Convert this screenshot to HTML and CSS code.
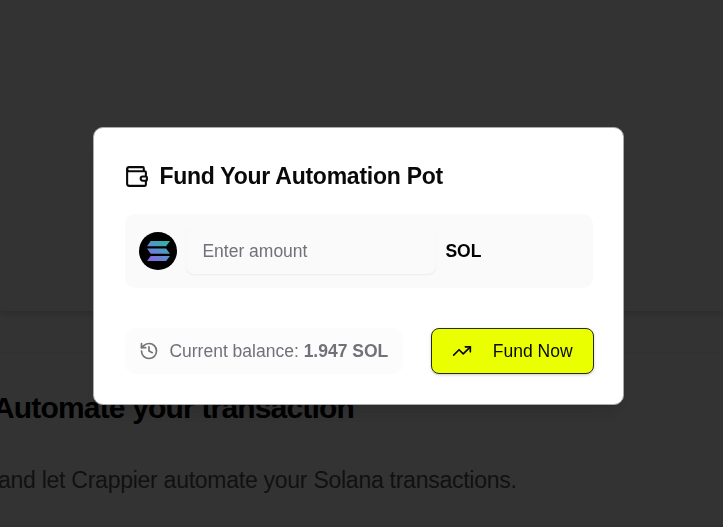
FILE: index.html
```html
<!DOCTYPE html>
<html lang="en">
<head>
<meta charset="utf-8">
<title>Fund Your Automation Pot</title>
<link rel="stylesheet" href="styles.css">
</head>
<body>
<main class="page">
  <section class="upper"></section>
  <section class="promo">
    <h1 class="promo-title">Automate your transaction</h1>
    <p class="promo-text">and let Crappier automate your Solana transactions.</p>
  </section>
</main>
<div class="overlay">
  <div class="dialog" role="dialog">
    <h2 class="dialog-title">
      <svg class="icon-wallet" viewBox="0 0 24 24"><path d="M19 7V4a1 1 0 0 0-1-1H5a2 2 0 0 0 0 4h15a1 1 0 0 1 1 1v4h-3a2 2 0 0 0 0 4h3a1 1 0 0 0 1-1v-2a1 1 0 0 0-1-1"/><path d="M3 5v14a2 2 0 0 0 2 2h15a1 1 0 0 0 1-1v-4"/></svg>
      <span>Fund Your Automation Pot</span>
    </h2>
    <div class="amount">
      <svg class="solana" viewBox="0 0 38 38">
        <defs><linearGradient id="sol" gradientUnits="userSpaceOnUse" x1="27" y1="8" x2="12" y2="30"><stop offset="0" stop-color="#2bb8a0"/><stop offset=".5" stop-color="#5b8fcc"/><stop offset="1" stop-color="#8a62e6"/></linearGradient></defs>
        <circle cx="19" cy="19" r="19"/>
        <path fill="url(#sol)" d="M11.7 9H31l-3.9 5.2H8zM8 16.5h19.1l3.9 5.2H11.7zM11.7 23.9H31l-3.9 5.2H8z"/>
      </svg>
      <input class="field" type="text" placeholder="Enter amount">
      <span class="unit">SOL</span>
    </div>
    <div class="actions">
      <div class="balance">
        <svg class="icon-history" viewBox="0 0 24 24"><path d="M3 12a9 9 0 1 0 9-9 9.75 9.75 0 0 0-6.74 2.74L3 8"/><path d="M3 3v5h5M12 7v5l4 2"/></svg>
        <span>Current balance: <strong>1.947 SOL</strong></span>
      </div>
      <button class="fund">
        <svg class="icon-trend" viewBox="0 0 24 24"><path d="M22 7l-8.5 8.5-5-5L2 17"/><path d="M16 7h6v6"/></svg>
        <span>Fund Now</span>
      </button>
    </div>
  </div>
</div>
</body>
</html>
```
FILE: styles.css
```css
* { box-sizing: border-box; }
body {
  margin: 0;
  height: 527px;
  overflow: hidden;
  background: #fff;
  color: #09090b;
  font-family: "Liberation Sans", Arial, sans-serif;
  font-size: 17.5px;
}
.page { height: 527px; display: flex; flex-direction: column; }
.upper { height: 311px; flex: none; box-shadow: 0 2px 8px rgba(0, 0, 0, .2); }
.promo {
  height: 174px;
  flex: none;
  margin-top: 41px;
  padding-top: 37px;
  border-top: 1px solid #f4f4f5;
  border-bottom: 1px solid #e4e4e7;
  white-space: nowrap;
}
.promo-title { margin: 0 0 0 -7px; font-size: 30px; line-height: 36px; letter-spacing: -.83px; color: #000; }
.promo-text { margin: 40px 0 0 -2px; font-size: 23px; line-height: 28px; letter-spacing: -.26px; color: #555; }
.overlay {
  position: fixed;
  inset: 0;
  display: flex;
  align-items: flex-start;
  background: rgba(0, 0, 0, .8);
}
.dialog {
  width: 531px;
  height: 278px;
  margin: 127px 0 0 93.4px;
  padding: 34px 30px 0 31px;
  border: 1px solid #aaa;
  border-radius: 10px;
  background: #fff;
  box-shadow: 0 12px 19px -4px rgba(0, 0, 0, .12), 0 5px 8px -5px rgba(0, 0, 0, .12);
}
svg { flex: none; }
.icon-wallet, .icon-history, .icon-trend {
  fill: none;
  stroke: currentColor;
  stroke-width: 2;
  stroke-linecap: round;
  stroke-linejoin: round;
}
.icon-wallet { width: 25px; height: 25px; margin-left: -1px; }
.icon-history, .icon-trend { width: 20px; height: 20px; }
.dialog-title {
  display: flex;
  align-items: center;
  gap: 10px;
  height: 28px;
  margin: 0;
  font-size: 23px;
  line-height: 28px;
  letter-spacing: -.25px;
}
.amount {
  display: flex;
  align-items: center;
  height: 74px;
  margin-top: 24px;
  padding-left: 14px;
  border-radius: 10px;
  background: #fafafa;
}
.solana { width: 38px; height: 38px; }
.field {
  width: 250px;
  height: 46px;
  margin-left: 9px;
  padding: 0 15px;
  border: 1px solid #fafafa;
  border-radius: 8px;
  background: #fafafa;
  box-shadow: 0 1px 2px rgba(0, 0, 0, .06);
  font: inherit;
}
.field::placeholder { color: #71717a; opacity: 1; }
.unit { margin-left: 9px; font-weight: 700; color: #000; }
.actions { display: flex; justify-content: space-between; margin-top: 40px; }
.balance {
  display: flex;
  align-items: center;
  gap: 10px;
  width: 278px;
  height: 46px;
  padding-left: 14px;
  border-radius: 10px;
  background: #fcfcfc;
  color: #71717a;
  white-space: nowrap;
}
.icon-history { color: #737373; }
.fund {
  display: flex;
  align-items: center;
  gap: 21px;
  width: 163px;
  height: 46px;
  margin-right: -.4px;
  padding: 0 0 0 20px;
  border: 1px solid #292b12;
  border-radius: 8px;
  background: #eaff00;
  box-shadow: 0 1px 3px rgba(0, 0, 0, .2);
  color: #09090b;
  font: inherit;
  white-space: nowrap;
}
```
